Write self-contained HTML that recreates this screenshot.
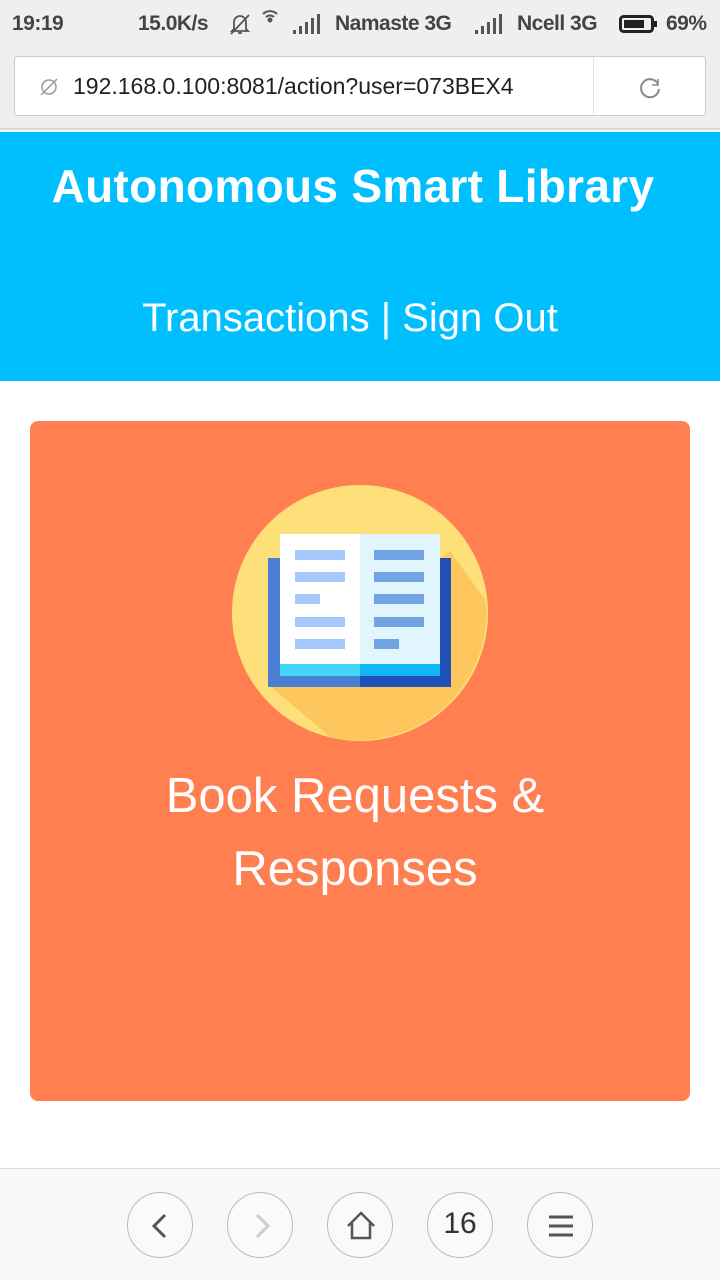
<!DOCTYPE html>
<html><head><meta charset="utf-8"><style>
*{margin:0;padding:0;box-sizing:border-box}
body{width:720px;height:1280px;background:#fff;font-family:"Liberation Sans",sans-serif;position:relative;overflow:hidden}
.sb{position:absolute;top:0;left:0;width:720px;height:130px;background:#efeff0;border-bottom:2px solid #d8d8d8}
.st{position:absolute;top:12px;font-size:21px;font-weight:bold;color:#444;letter-spacing:-0.5px}
.url{position:absolute;left:14px;top:56px;width:692px;height:60px;background:#fff;border:1px solid #ccc;border-radius:4px}
.hdr{position:absolute;top:132px;left:0;width:720px;height:249px;background:#00bfff;color:#fff;text-align:center}
.card{position:absolute;left:30px;top:421px;width:660px;height:680px;background:#ff7f50;border-radius:8px}
.bot{position:absolute;top:1168px;left:0;width:720px;height:112px;background:#f8f8f8;border-top:1px solid #ddd}
.btn{position:absolute;top:1192px;width:66px;height:66px;border:1.5px solid #bbb;border-radius:50%;background:#fafafa}
</style></head><body>
<div class="sb">
<div class="st" style="left:12px">19:19</div>
<div class="st" style="left:138px">15.0K/s</div>
<svg style="position:absolute;left:228px;top:12px" width="24" height="24" viewBox="0 0 24 24" fill="none" stroke="#555" stroke-width="1.8"><path d="M6 17V10a6 6 0 0 1 12 0v7l2 2H4zM10 21h4M3 22L21 3"/></svg>
<svg style="position:absolute;left:260px;top:8px" width="20" height="16" viewBox="0 0 20 16" fill="none" stroke="#555" stroke-width="2"><path d="M3 6a10 10 0 0 1 14 0M6 9a6 6 0 0 1 8 0"/><circle cx="10" cy="12" r="1.5" fill="#555"/></svg>
<svg style="position:absolute;left:293px;top:14px" width="30" height="20"><rect x="0" y="16" width="3" height="4" fill="#555"/><rect x="6" y="12" width="3" height="8" fill="#555"/><rect x="12" y="8" width="3" height="12" fill="#555"/><rect x="18" y="4" width="3" height="16" fill="#555"/><rect x="24" y="0" width="3" height="20" fill="#555"/></svg>
<div class="st" style="left:335px">Namaste 3G</div>
<svg style="position:absolute;left:475px;top:14px" width="30" height="20"><rect x="0" y="16" width="3" height="4" fill="#555"/><rect x="6" y="12" width="3" height="8" fill="#555"/><rect x="12" y="8" width="3" height="12" fill="#555"/><rect x="18" y="4" width="3" height="16" fill="#555"/><rect x="24" y="0" width="3" height="20" fill="#555"/></svg>
<div class="st" style="left:517px">Ncell 3G</div>
<svg style="position:absolute;left:619px;top:15px" width="40" height="18"><rect x="1.5" y="1.5" width="32" height="15" rx="3" fill="none" stroke="#222" stroke-width="3"/><rect x="5" y="5" width="20" height="8" fill="#222"/><rect x="35" y="6" width="3" height="6" fill="#222"/></svg>
<div class="st" style="left:666px">69%</div>
<div class="url">
<svg style="position:absolute;left:24px;top:20px" width="20" height="20" viewBox="0 0 20 20" fill="none" stroke="#999" stroke-width="1.5"><circle cx="10" cy="10" r="7"/><path d="M2 18L18 2"/></svg>
<div style="position:absolute;left:58px;top:16px;font-size:23px;color:#222;white-space:nowrap;width:520px;overflow:hidden">192.168.0.100:8081/action?user=073BEX4</div>
<div style="position:absolute;left:578px;top:0;width:1px;height:58px;background:#e4e4e4"></div>
<svg style="position:absolute;left:622px;top:18px" width="26" height="26" viewBox="0 0 26 26" fill="none" stroke="#888" stroke-width="2"><path d="M21 9A9 9 0 1 0 22 14"/><path d="M21 4v6h-6" stroke-width="1.5"/></svg>
</div>
</div>
<div class="hdr">
<div style="position:absolute;top:27px;left:-7px;width:100%;font-size:46px;font-weight:bold;letter-spacing:0.3px">Autonomous Smart Library</div>
<div style="position:absolute;top:164px;left:-10px;width:100%;font-size:40px">Transactions | Sign Out</div>
</div>
<div class="card">
<svg style="position:absolute;left:202px;top:64px" width="256" height="256" viewBox="202 64 256 256">
<circle cx="330" cy="192" r="128" fill="#fde07a"/>
<path d="M420 130 L456 180 A128 128 0 0 1 300 316 L240 265Z" fill="#fdc75e"/>
<rect x="238" y="137" width="92" height="129" fill="#4a7fd4"/>
<rect x="330" y="137" width="91" height="129" fill="#1e50b8"/>
<rect x="250" y="113" width="80" height="140" fill="#fff"/>
<rect x="330" y="113" width="80" height="140" fill="#e0f5fc"/>
<rect x="250" y="243" width="80" height="12" fill="#43d5f7"/>
<rect x="330" y="243" width="80" height="12" fill="#12b6f5"/>
<g fill="#a6c9fb"><rect x="265" y="129" width="50" height="10"/><rect x="265" y="151" width="50" height="10"/><rect x="265" y="173" width="25" height="10"/><rect x="265" y="196" width="50" height="10"/><rect x="265" y="218" width="50" height="10"/></g>
<g fill="#72a4e4"><rect x="344" y="129" width="50" height="10"/><rect x="344" y="151" width="50" height="10"/><rect x="344" y="173" width="50" height="10"/><rect x="344" y="196" width="50" height="10"/><rect x="344" y="218" width="25" height="10"/></g>
</svg>
<div style="position:absolute;top:339px;left:-5px;width:100%;text-align:center;color:#fff;font-size:49px;line-height:73px;padding:0 90px">Book Requests &amp; Responses</div>
</div>
<div class="bot"></div>
<div class="btn" style="left:127px"><svg width="66" height="66"><path d="M37 22L26 33L37 44" fill="none" stroke="#555" stroke-width="3"/></svg></div>
<div class="btn" style="left:227px"><svg width="66" height="66"><path d="M29 22L40 33L29 44" fill="none" stroke="#ccc" stroke-width="3"/></svg></div>
<div class="btn" style="left:327px"><svg width="66" height="66"><path d="M20 33L33 20L46 33M24 30V45H42V30" fill="none" stroke="#555" stroke-width="2.5"/></svg></div>
<div class="btn" style="left:427px;text-align:center;line-height:62px;font-size:30px;color:#333">16</div>
<div class="btn" style="left:527px"><svg width="66" height="66"><path d="M21 24H45M21 33H45M21 42H45" stroke="#555" stroke-width="3"/></svg></div>
</body></html>
